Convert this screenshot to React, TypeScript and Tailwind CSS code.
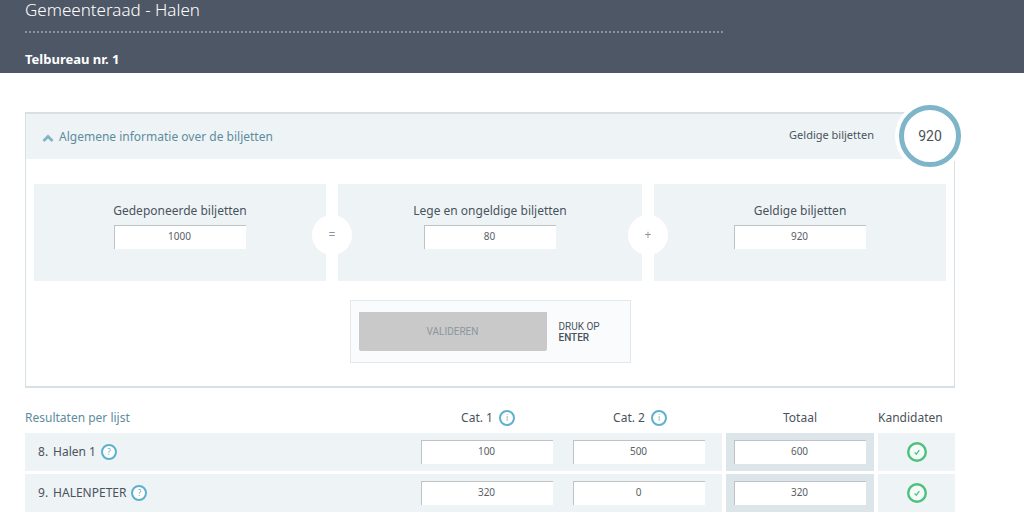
import { useState } from "react";

type Result = { id: number; name: string; cat1: string; cat2: string; total: string };

const results: Result[] = [
  { id: 8, name: "Halen 1", cat1: "100", cat2: "500", total: "600" },
  { id: 9, name: "HALENPETER", cat1: "320", cat2: "0", total: "320" },
];

function NumberBox({ id, label, value }: { id: string; label?: string; value: string }) {
  const [text, setText] = useState(value);
  return (
    <input
      id={id}
      aria-label={label}
      type="text"
      inputMode="numeric"
      value={text}
      onChange={(e) => setText(e.target.value)}
      className="mx-auto block h-6 w-[132px] border-t border-l border-[#bcc2c5] bg-white pr-[2px] pb-[3px] text-center font-['Noto_Sans',sans-serif] text-[10px] text-[#5a6067] outline-none"
    />
  );
}

function RoundIcon({ label, children }: { label: string; children: string }) {
  return (
    <button
      type="button"
      aria-label={label}
      className="inline-flex size-4 shrink-0 items-center justify-center rounded-full border-2 border-[#5db1cd] bg-white text-[8px] leading-none text-[#6fa9c0]"
    >
      {children}
    </button>
  );
}

function Operator({ children }: { children: string }) {
  return (
    <span className="absolute top-[31px] -right-[26px] z-10 flex size-10 items-center justify-center rounded-full bg-white text-xs text-[#8a989c]">
      {children}
    </span>
  );
}

function BallotCard({ id, label, value, operator }: { id: string; label: string; value: string; operator?: string }) {
  return (
    <div className="relative h-[97px] bg-[#eef3f6] pt-[18px] text-center">
      <label htmlFor={id} className="mb-[5px] block text-xs leading-[18px]">
        {label}
      </label>
      <NumberBox id={id} value={value} />
      {operator && <Operator>{operator}</Operator>}
    </div>
  );
}

function CheckIcon() {
  return (
    <svg viewBox="0 0 20 20" className="mx-auto size-5" role="img" aria-label="In orde">
      <circle cx="10" cy="10" r="8.8" fill="#f3faf7" stroke="#4cc07c" strokeWidth="2.4" />
      <path d="M7.6 10.4 9.3 12.2 12.3 8.2" fill="none" stroke="#4cc07c" strokeWidth="1.2" />
    </svg>
  );
}

export default function App() {
  return (
    <div className="min-h-screen bg-white font-['Noto_Sans',sans-serif] text-[#4a535c]">
      <header className="bg-[#4e5766] pr-[69px] pb-1 pl-[25px] text-white">
        <div className="w-3/4">
          <h1 className="border-b-2 border-dotted border-[#8b929d] pb-[11px] text-[17px] leading-5 font-light">
            Gemeenteraad - Halen
          </h1>
        </div>
        <h2 className="pt-4 text-[13px] leading-5 font-bold">Telbureau nr. 1</h2>
      </header>

      <main className="pt-[39px] pr-[69px] pl-[25px]">
        <section className="relative border-x border-y-2 border-[#d7e1e5]">
          <div className="flex h-[45px] items-center justify-between bg-[#eef3f6] pr-20 pl-4">
            <button type="button" className="flex items-center gap-[5px] text-xs text-[#5d8d9d]">
              <svg viewBox="0 0 12 8" className="mt-[2px] h-2 w-3" aria-hidden="true">
                <path d="M1.5 7 6 2.5 10.5 7" fill="none" stroke="#7fb5c4" strokeWidth="2.8" />
              </svg>
              Algemene informatie over de biljetten
            </button>
            <span className="pb-1 text-[11px] leading-4">Geldige biljetten</span>
          </div>
          <div className="absolute -top-[9px] -right-[7px] flex size-[62px] items-center justify-center rounded-full border-[5px] border-[#7fb5c8] bg-white font-['Roboto',sans-serif] text-sm ring-4 ring-white">
            920
          </div>

          <div className="grid grid-cols-[292fr_304fr_292fr] gap-3 px-2 pt-[25px]">
            <BallotCard id="deposited" label="Gedeponeerde biljetten" value="1000" operator="=" />
            <BallotCard id="invalid" label="Lege en ongeldige biljetten" value="80" operator="+" />
            <BallotCard id="valid" label="Geldige biljetten" value="920" />
          </div>

          <div className="mx-auto mt-[19px] mb-[23px] flex w-[281px] items-center gap-3 border border-[#e3e9eb] bg-[#f9fbfc] px-2 py-[11px]">
            <button
              type="button"
              disabled
              className="h-[39px] w-[188px] rounded-b-xs bg-[#c9c9c9] font-['Roboto',sans-serif] text-[10px] text-[#8b979d]"
            >
              VALIDEREN
            </button>
            <p className="font-['Roboto',sans-serif] text-[10px] leading-[11px]">
              DRUK OP
              <br />
              <strong className="font-medium">ENTER</strong>
            </p>
          </div>
        </section>

        <table className="mt-[14px] w-full table-fixed border-separate border-spacing-0 text-xs">
          <thead>
            <tr className="h-[31px]">
              <th className="text-left font-normal text-[#5d8d9d]">Resultaten per lijst</th>
              <th className="w-[152px] pl-[2px] font-normal">
                <span className="flex items-center justify-center gap-[6px]">
                  Cat. 1 <RoundIcon label="Info over categorie 1">i</RoundIcon>
                </span>
              </th>
              <th className="w-[159px] pr-[5px] font-normal">
                <span className="flex items-center justify-center gap-[6px]">
                  Cat. 2 <RoundIcon label="Info over categorie 2">i</RoundIcon>
                </span>
              </th>
              <th className="w-[152px] border-l-4 border-white font-normal">Totaal</th>
              <th className="w-[81px] border-l-4 border-white text-left font-normal whitespace-nowrap">Kandidaten</th>
            </tr>
          </thead>
          <tbody>
            {results.map((row) => (
              <tr key={row.id} className="h-[41px]">
                <td className="border-b-[3px] border-white bg-[#eef3f6] pl-[13px]">
                  <span className="flex items-center gap-[5px]">
                    {row.id}. <span>{row.name}</span>
                    <RoundIcon label={`Info over ${row.name}`}>?</RoundIcon>
                  </span>
                </td>
                <td className="border-b-[3px] border-white bg-[#eef3f6]">
                  <NumberBox id={`cat1-${row.id}`} label={`${row.name} Cat. 1`} value={row.cat1} />
                </td>
                <td className="border-b-[3px] border-white bg-[#eef3f6] pr-[7px]">
                  <NumberBox id={`cat2-${row.id}`} label={`${row.name} Cat. 2`} value={row.cat2} />
                </td>
                <td className="border-b-[3px] border-l-4 border-white bg-[#dce5e9]">
                  <NumberBox id={`total-${row.id}`} label={`${row.name} Totaal`} value={row.total} />
                </td>
                <td className="border-b-[3px] border-l-4 border-white bg-[#eef3f6]">
                  <CheckIcon />
                </td>
              </tr>
            ))}
          </tbody>
        </table>
      </main>
    </div>
  );
}
